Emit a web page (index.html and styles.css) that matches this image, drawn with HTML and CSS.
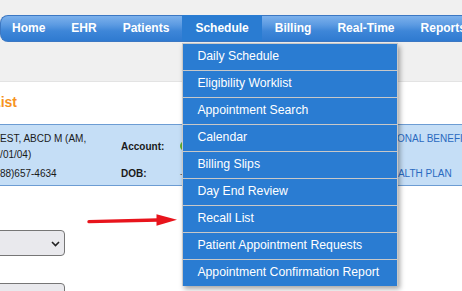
FILE: index.html
```html
<!DOCTYPE html>
<html lang="en">
<head>
<meta charset="utf-8">
<title>Recall List</title>
<link rel="stylesheet" href="styles.css">
</head>
<body>
<header class="top">
  <nav class="navbar">
    <ul class="menu">
      <li class="menu-item first">Home</li>
      <li class="menu-item">EHR</li>
      <li class="menu-item">Patients</li>
      <li class="menu-item active">Schedule
        <ul class="dropdown">
          <li class="dd-item">Daily Schedule</li>
          <li class="dd-item">Eligibility Worklist</li>
          <li class="dd-item">Appointment Search</li>
          <li class="dd-item">Calendar</li>
          <li class="dd-item">Billing Slips</li>
          <li class="dd-item">Day End Review</li>
          <li class="dd-item">Recall List</li>
          <li class="dd-item">Patient Appointment Requests</li>
          <li class="dd-item last">Appointment Confirmation Report</li>
        </ul>
      </li>
      <li class="menu-item">Billing</li>
      <li class="menu-item">Real-Time</li>
      <li class="menu-item">Reports</li>
      <li class="menu-item">Admin</li>
    </ul>
  </nav>
</header>
<main class="panel">
  <h1 class="page-title">Recall List</h1>
  <section class="patient-card">
    <div class="pc-name">TEST, ABCD M (AM, 01/01/04)</div>
    <div class="pc-label">Account:</div>
    <div class="pc-value"><span class="status-dot"></span></div>
    <div class="pc-ins">NATIONAL BENEFIT ADMINISTRATORS</div>
    <div class="pc-phone">(888)657-4634</div>
    <div class="pc-label">DOB:</div>
    <div class="pc-value pc-dob">-</div>
    <div class="pc-ins pc-plan">HEALTH PLAN</div>
  </section>
  <div class="filters">
    <div class="select-wrap">
      <select class="select"><option>All Providers</option></select>
      <svg class="chevron" width="9" height="6" viewBox="0 0 9 6"><path d="M1 1 L4.5 4.5 L8 1" fill="none" stroke="#222" stroke-width="1.6"/></svg>
    </div>
    <div class="select-wrap">
      <select class="select"><option>All Locations</option></select>
      <svg class="chevron" width="9" height="6" viewBox="0 0 9 6"><path d="M1 1 L4.5 4.5 L8 1" fill="none" stroke="#222" stroke-width="1.6"/></svg>
    </div>
  </div>
  <svg class="annotation-arrow" width="94" height="16" viewBox="0 0 94 16">
    <path d="M3 9.6 L72 8" fill="none" stroke="#e8141c" stroke-width="3.4" stroke-linecap="round"/>
    <polygon points="70.5,2.3 91,7.7 70.5,13.7" fill="#e8141c"/>
  </svg>
</main>
</body>
</html>
```
FILE: styles.css
```css
html, body {
  margin: 0;
  padding: 0;
}
body {
  width: 462px;
  height: 291px;
  overflow: hidden;
  background: #ffffff;
  font-family: "Liberation Sans", Arial, sans-serif;
  display: flex;
  flex-direction: column;
}
.top {
  height: 81px;
  background: #f0f0f0;
  padding-top: 15px;
  box-sizing: border-box;
  flex: none;
}
.navbar {
  width: 700px;
}
.menu {
  list-style: none;
  margin: 0;
  padding: 0;
  display: flex;
  height: 25px;
  border: 1px solid #3c78c3;
  border-right: none;
  border-radius: 8px 0 0 8px;
  background: linear-gradient(to bottom, #7cb1ec 0%, #5c9be2 35%, #3e86d8 60%, #2f7ad0 100%);
}
.menu-item {
  color: #ffffff;
  font-weight: bold;
  font-size: 12px;
  line-height: 25px;
  padding: 0 13px;
  white-space: nowrap;
}
.menu-item.first {
  padding-left: 11px;
}
.menu-item.active {
  position: relative;
  background: #2a7cd2;
  margin-top: -1px;
  height: 26px;
  line-height: 26px;
}
.dropdown {
  position: absolute;
  z-index: 10;
  left: 0;
  top: 28px;
  width: 216px;
  box-sizing: border-box;
  list-style: none;
  margin: 0;
  padding: 0;
  background: #2a7cd2;
  border: 1px solid #c8c8c8;
  border-bottom: none;
  box-shadow: 2px 3px 5px rgba(0, 0, 0, 0.35);
}
.dd-item {
  height: 26px;
  line-height: 25px;
  padding-left: 14px;
  border-bottom: 1px solid #c8c8c8;
  font-size: 12.25px;
  font-weight: normal;
  color: #ffffff;
  white-space: nowrap;
}
.dd-item.last {
  border-bottom: none;
}
.panel {
  position: relative;
  flex: 1;
  background: #ffffff;
  border-top: 1px solid #e3e3e3;
}
.page-title {
  margin: 11px 0 0 -53px;
  font-size: 14px;
  line-height: 18px;
  font-weight: bold;
  color: #f7931e;
  white-space: nowrap;
}
.patient-card {
  margin: 13px 0 0 -9px;
  display: grid;
  grid-template-columns: 130px 59px 195px 1fr;
  row-gap: 3px;
  padding: 6px 0 3px;
  background: #c5def6;
  border-top: 1px solid #6c9cd3;
  border-bottom: 1px solid #6c9cd3;
  font-size: 10px;
  line-height: 16px;
  color: #1a1a1a;
}
.pc-name {
  margin-left: -2px;
  text-indent: 5px;
}
.pc-label {
  font-weight: bold;
  align-self: center;
}
.pc-value {
  align-self: center;
  display: flex;
  align-items: center;
}
.pc-dob {
  color: #666;
}
.status-dot {
  width: 10px;
  height: 10px;
  border-radius: 50%;
  background: #5fb030;
  margin-top: -2px;
}
.pc-ins {
  color: #2a6ac0;
  white-space: nowrap;
  overflow: hidden;
}
.pc-plan {
  padding-left: 9px;
}
.filters {
  margin-top: 44px;
  display: flex;
  flex-direction: column;
  gap: 27px;
}
.select-wrap {
  position: relative;
  width: 200px;
  height: 26px;
  margin-left: -135px;
}
.select {
  appearance: none;
  -webkit-appearance: none;
  width: 100%;
  height: 100%;
  box-sizing: border-box;
  border: 1px solid #767676;
  border-radius: 4px;
  background: #e9e9ed;
  font-family: "Liberation Sans", Arial, sans-serif;
  font-size: 12px;
  color: #222;
  padding-left: 6px;
  margin: 0;
}
.chevron {
  position: absolute;
  right: 5px;
  top: 11px;
}
.annotation-arrow {
  position: absolute;
  left: 86px;
  top: 130px;
}
```
